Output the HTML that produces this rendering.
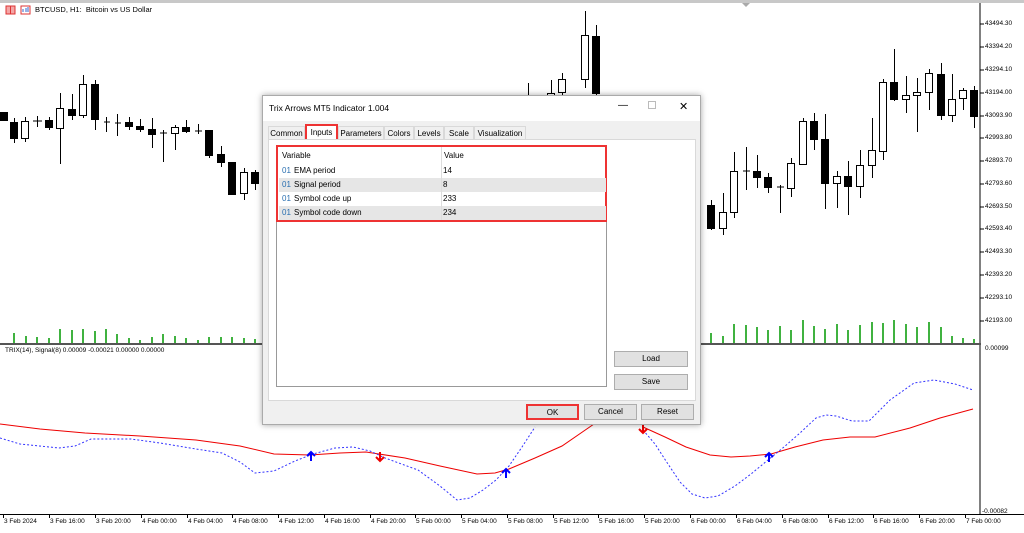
<!DOCTYPE html>
<html><head><meta charset="utf-8"><style>
*{margin:0;padding:0;box-sizing:border-box}
body{width:1024px;height:533px;overflow:hidden;background:#fff;font-family:"Liberation Sans",sans-serif;position:relative}
.t{position:absolute;font-size:8px;color:#000;white-space:nowrap}
.dlg{position:absolute;left:262px;top:95px;width:439px;height:330px;background:#f0f0f0;border:1px solid #aaa;box-shadow:0 0 6px rgba(0,0,0,.35);font-size:8px}
.dlg .title{position:absolute;left:0;top:0;right:0;height:25px;background:#fff}
.tab{position:absolute;top:30px;height:14px;border:1px solid #d9d9d9;border-bottom:none;background:#f0f0f0;font-size:8px;line-height:13px;text-align:center}
.panel{position:absolute;left:5px;top:43px;width:428px;height:262px;background:#fff;border:1px solid #d9d9d9}
.btn{position:absolute;height:16px;background:#e1e1e1;border:1px solid #adadad;text-align:center;line-height:14px;font-size:8px}
.row{position:absolute;left:1px;width:327px;height:14px;line-height:14px;font-size:8px}
.row span{position:absolute}
.ax{font-size:6.5px}
</style></head><body>
<svg width="1024" height="533" style="position:absolute;left:0;top:0">
<rect x="0" y="0" width="1024" height="3" fill="#c8c8c8"/>
<polygon points="742,3 750,3 746,7" fill="#aaa"/>
<line x1="980" y1="3" x2="980" y2="514" stroke="#000"/>
<line x1="0" y1="514.5" x2="1024" y2="514.5" stroke="#000"/>
<rect x="0" y="343" width="981" height="2" fill="#555"/>
<g stroke="#000" fill="none">
<line x1="980" y1="24" x2="984" y2="24"/><line x1="980" y1="47" x2="984" y2="47"/><line x1="980" y1="70" x2="984" y2="70"/><line x1="980" y1="93" x2="984" y2="93"/><line x1="980" y1="116" x2="984" y2="116"/><line x1="980" y1="138" x2="984" y2="138"/><line x1="980" y1="161" x2="984" y2="161"/><line x1="980" y1="184" x2="984" y2="184"/><line x1="980" y1="207" x2="984" y2="207"/><line x1="980" y1="229" x2="984" y2="229"/><line x1="980" y1="252" x2="984" y2="252"/><line x1="980" y1="275" x2="984" y2="275"/><line x1="980" y1="298" x2="984" y2="298"/><line x1="980" y1="321" x2="984" y2="321"/>
</g>
<g stroke="#000" stroke-width="1">
<path d="M4.5 112V121M14.5 118V143M25.5 117V142M37.5 116V127M49.5 117V130M60.5 93V164M72.5 94V120M83.5 75V118M95.5 80V130M106.5 117V132M117.5 114V136M129.5 117V130M140.5 119V132M152.5 118V148M163.5 130V162M175.5 125V150M186.5 120V133M198.5 124V134M209.5 130V158M221.5 146V167M232.5 162V195M244.5 168V200M255.5 170V190
M528.5 83V97M551.5 80V97M562.5 73V97M585.5 11V88M596.5 25V97
M711.5 200V230M723.5 193V235M734.5 152V218M746.5 147V190M757.5 155V188M768.5 173V193M780.5 185V213M791.5 158V197M803.5 118V165M814.5 113V150M825.5 114V209M837.5 171V208M848.5 161V215M860.5 150V198M872.5 118V178M883.5 79V160M894.5 49V101M906.5 76V113M917.5 78V132M929.5 69V110M941.5 63V120M952.5 74V122M963.5 88V110M974.5 86V128"/>
<path d="M33 121H42M104 122H110M115 123H121M160 133H167M195 131H202M607 96H614M743 171H750M777 187H784"/>
</g>
<g stroke="#000" fill="#000">
<rect x="0.5" y="112.5" width="7" height="8"/><rect x="10.5" y="122.5" width="7" height="16"/><rect x="45.5" y="120.5" width="7" height="7"/><rect x="68.5" y="109.5" width="7" height="6"/><rect x="91.5" y="84.5" width="7" height="35"/><rect x="125.5" y="122.5" width="7" height="4"/><rect x="136.5" y="126.5" width="7" height="3"/><rect x="148.5" y="129.5" width="7" height="5"/><rect x="182.5" y="127.5" width="7" height="4"/><rect x="205.5" y="130.5" width="7" height="25"/><rect x="217.5" y="154.5" width="7" height="8"/><rect x="228.5" y="162.5" width="7" height="32"/><rect x="251.5" y="172.5" width="7" height="11"/>
<rect x="592.5" y="36.5" width="7" height="57"/>
<rect x="707.5" y="205.5" width="7" height="23"/><rect x="753.5" y="171.5" width="7" height="6"/><rect x="764.5" y="177.5" width="7" height="10"/><rect x="810.5" y="121.5" width="7" height="18"/><rect x="821.5" y="139.5" width="7" height="44"/><rect x="844.5" y="176.5" width="7" height="10"/><rect x="890.5" y="82.5" width="7" height="17"/><rect x="937.5" y="74.5" width="7" height="41"/><rect x="970.5" y="90.5" width="7" height="26"/>
</g>
<g stroke="#000" fill="#fff">
<rect x="21.5" y="121.5" width="7" height="17"/><rect x="56.5" y="108.5" width="7" height="20"/><rect x="79.5" y="84.5" width="7" height="31"/><rect x="171.5" y="127.5" width="7" height="6"/><rect x="240.5" y="172.5" width="7" height="21"/>
<rect x="547.5" y="93.5" width="7" height="3"/><rect x="558.5" y="79.5" width="7" height="13"/><rect x="581.5" y="35.5" width="7" height="44"/>
<rect x="719.5" y="212.5" width="7" height="16"/><rect x="730.5" y="171.5" width="7" height="41"/><rect x="787.5" y="163.5" width="7" height="25"/><rect x="799.5" y="121.5" width="7" height="43"/><rect x="833.5" y="176.5" width="7" height="7"/><rect x="856.5" y="165.5" width="7" height="21"/><rect x="868.5" y="150.5" width="7" height="15"/><rect x="879.5" y="82.5" width="7" height="69"/><rect x="902.5" y="95.5" width="7" height="4"/><rect x="913.5" y="92.5" width="7" height="3"/><rect x="925.5" y="73.5" width="7" height="19"/><rect x="948.5" y="99.5" width="7" height="16"/><rect x="959.5" y="90.5" width="7" height="8"/>
</g>
<g stroke="#090" stroke-width="1.5">
<path d="M14 333V343M26 336V343M37 337V343M49 338V343M60 329V343M72 330V343M83 329V343M95 331V343M106 329V343M117 334V343M129 338V343M140 340V343M152 337V343M163 334V343M175 336V343M186 338V343M198 340V343M209 337V343M221 337V343M232 337V343M244 338V343M255 339V343"/>
<path d="M711 333V343M723 336V343M734 324V343M746 325V343M757 327V343M768 330V343M780 326V343M791 330V343M803 320V343M814 326V343M825 329V343M837 324V343M848 330V343M860 325V343M872 322V343M883 323V343M894 320V343M906 324V343M917 327V343M929 322V343M941 327V343M952 336V343M963 338V343M974 339V343"/>
</g>
<polyline fill="none" stroke="#e00" stroke-width="1" points="0,424 40,429 85,433 140,436 196,440 240,446 274,454 310,455 340,453 366,452 405,458 440,466 477,474 495,473 509,469 535,458 562,446 594,424"/>
<polyline fill="none" stroke="#e00" stroke-width="1" points="643,427 665,437 686,447 710,455 731,457 750,456 771,454 795,447 823,440 850,437 875,437 910,428 940,418 973,409"/>
<polyline fill="none" stroke="#33f" stroke-width="1" stroke-dasharray="2,2" points="0,438 20,444 59,448 75,446 91,439 131,439 160,443 196,449 222,453 240,462 255,473 274,471 295,461 313,454 335,448 353,447 370,451 385,458 418,470 440,486 457,500 470,498 483,490 496,480 509,466 522,447 535,427"/>
<polyline fill="none" stroke="#33f" stroke-width="1" stroke-dasharray="2,2" points="643,430 655,444 666,461 680,482 692,494 705,498 718,496 735,486 751,474 768,460 784,447 800,433 816,418 826,415 836,416 852,421 869,421 890,400 914,383 934,380 955,384 973,390"/>
<g stroke-width="2">
<path d="M311 461V453M307 456L311 452L315 456" stroke="#00f" fill="none"/>
<path d="M506 478V470M502 473L506 469L510 473" stroke="#00f" fill="none"/>
<path d="M769 462V454M765 457L769 453L773 457" stroke="#00f" fill="none"/>
<path d="M380 452V460M376 457L380 461L384 457" stroke="#e00" fill="none"/>
<path d="M643 424V432M639 429L643 433L647 429" stroke="#e00" fill="none"/>
</g>
<g stroke="#000"><path d="M3.5 514V518M49.5 514V518M95.5 514V518M141.5 514V518M187.5 514V518M232.5 514V518M278.5 514V518M324.5 514V518M370.5 514V518M415.5 514V518M461.5 514V518M507.5 514V518M553.5 514V518M598.5 514V518M644.5 514V518M690.5 514V518M736.5 514V518M782.5 514V518M828.5 514V518M873.5 514V518M919.5 514V518M965.5 514V518"/></g>
<rect x="6" y="6" width="9" height="8" fill="#f4a6a6" stroke="#d33"/><line x1="10.5" y1="6" x2="10.5" y2="14" stroke="#d33"/>
<rect x="21" y="6" width="9" height="8" fill="#fff" stroke="#d33"/><path d="M23 12V9M26 12V8M28 12V7" stroke="#36c"/>
</svg>
<div class="t" style="left:35px;top:5px;font-size:7.5px">BTCUSD, H1:&nbsp; Bitcoin vs US Dollar</div>
<div class="t" style="left:5px;top:347px;font-size:6.5px">TRIX(14), Signal(8) 0.00009 -0.00021 0.00000 0.00000</div>
<div class="t ax" style="left:985px;top:20px">43494.30</div><div class="t ax" style="left:985px;top:43px">43394.20</div><div class="t ax" style="left:985px;top:66px">43294.10</div><div class="t ax" style="left:985px;top:89px">43194.00</div><div class="t ax" style="left:985px;top:112px">43093.90</div><div class="t ax" style="left:985px;top:134px">42993.80</div><div class="t ax" style="left:985px;top:157px">42893.70</div><div class="t ax" style="left:985px;top:180px">42793.60</div><div class="t ax" style="left:985px;top:203px">42693.50</div><div class="t ax" style="left:985px;top:225px">42593.40</div><div class="t ax" style="left:985px;top:248px">42493.30</div><div class="t ax" style="left:985px;top:271px">42393.20</div><div class="t ax" style="left:985px;top:294px">42293.10</div><div class="t ax" style="left:985px;top:317px">42193.00</div>
<div class="t ax" style="left:985px;top:345px">0.00099</div><div class="t ax" style="left:982px;top:508px">-0.00082</div>
<div style="position:absolute;left:0;top:518px;white-space:nowrap">
<span class="t ax" style="left:4px">3 Feb 2024</span><span class="t ax" style="left:50px">3 Feb 16:00</span><span class="t ax" style="left:96px">3 Feb 20:00</span><span class="t ax" style="left:142px">4 Feb 00:00</span><span class="t ax" style="left:188px">4 Feb 04:00</span><span class="t ax" style="left:233px">4 Feb 08:00</span><span class="t ax" style="left:279px">4 Feb 12:00</span><span class="t ax" style="left:325px">4 Feb 16:00</span><span class="t ax" style="left:371px">4 Feb 20:00</span><span class="t ax" style="left:416px">5 Feb 00:00</span><span class="t ax" style="left:462px">5 Feb 04:00</span><span class="t ax" style="left:508px">5 Feb 08:00</span><span class="t ax" style="left:554px">5 Feb 12:00</span><span class="t ax" style="left:599px">5 Feb 16:00</span><span class="t ax" style="left:645px">5 Feb 20:00</span><span class="t ax" style="left:691px">6 Feb 00:00</span><span class="t ax" style="left:737px">6 Feb 04:00</span><span class="t ax" style="left:783px">6 Feb 08:00</span><span class="t ax" style="left:829px">6 Feb 12:00</span><span class="t ax" style="left:874px">6 Feb 16:00</span><span class="t ax" style="left:920px">6 Feb 20:00</span><span class="t ax" style="left:966px">7 Feb 00:00</span>
</div>
<div class="dlg">
<div class="title"><span class="t" style="left:6px;top:7px;font-size:8.5px">Trix Arrows MT5 Indicator 1.004</span>
<span class="t" style="left:355px;top:4px;font-size:10px">—</span><span class="t" style="left:385px;top:5px;width:8px;height:8px;border:1px solid #bbb"></span><span class="t" style="left:416px;top:4px;font-size:11px">✕</span></div>
<div class="tab" style="left:5px;width:37px">Common</div>
<div class="tab" style="left:42px;width:33px;background:#fff;border:2px solid #e33;top:28px;height:17px;line-height:13px">Inputs</div>
<div class="tab" style="left:75px;width:46px">Parameters</div>
<div class="tab" style="left:121px;width:30px">Colors</div>
<div class="tab" style="left:151px;width:30px">Levels</div>
<div class="tab" style="left:181px;width:30px">Scale</div>
<div class="tab" style="left:211px;width:52px">Visualization</div>
<div class="panel">
<div style="position:absolute;left:7px;top:5px;width:331px;height:242px;border:1px solid #999;background:#fff"></div>
<div style="position:absolute;left:7px;top:5px;width:331px;height:77px;border:2px solid #e33">
<div class="row" style="top:2px"><span style="left:3px">Variable</span><span style="left:165px">Value</span></div>
<div class="row" style="top:17px"><span style="left:3px;color:#2a6fb0">01</span><span style="left:15px">EMA period</span><span style="left:164px">14</span></div>
<div class="row" style="top:31px;background:#e6e6e6"><span style="left:3px;color:#2a6fb0">01</span><span style="left:15px">Signal period</span><span style="left:164px">8</span></div>
<div class="row" style="top:45px"><span style="left:3px;color:#2a6fb0">01</span><span style="left:15px">Symbol code up</span><span style="left:164px">233</span></div>
<div class="row" style="top:59px;background:#e6e6e6"><span style="left:3px;color:#2a6fb0">01</span><span style="left:15px">Symbol code down</span><span style="left:164px">234</span></div>
<div style="position:absolute;left:163px;top:0;width:1px;height:73px;background:#ddd"></div>
</div>
<div class="btn" style="left:345px;top:211px;width:74px">Load</div>
<div class="btn" style="left:345px;top:234px;width:74px">Save</div>
</div>
<div class="btn" style="left:263px;top:308px;width:53px;border:2px solid #e33">OK</div>
<div class="btn" style="left:321px;top:308px;width:53px">Cancel</div>
<div class="btn" style="left:378px;top:308px;width:53px">Reset</div>
</div>
</body></html>
